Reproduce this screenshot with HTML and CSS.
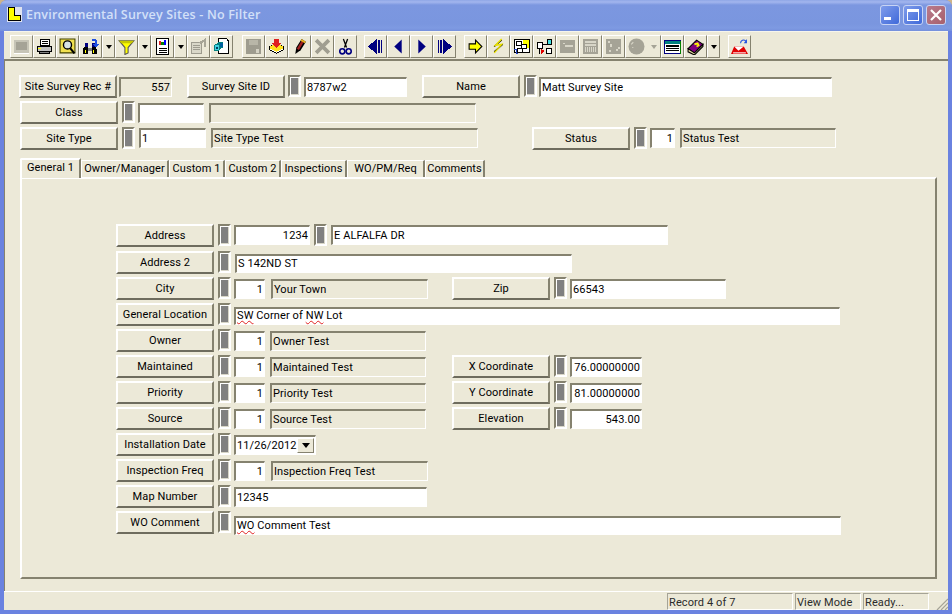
FILE: index.html
```html
<!DOCTYPE html>
<html lang="en">
<head>
<meta charset="utf-8">
<title>Environmental Survey Sites - No Filter</title>
<link rel="stylesheet" href="styles.css">
</head>
<body>
<div class="window">
  <header class="titlebar">
    <svg class="app-icon" viewBox="0 0 16 16" shape-rendering="crispEdges"><rect width="16" height="16" fill="#dfe3ef"/><path d="M1 0h7v9h7v6H1z" fill="#000"/><path d="M2 1h5v9h7v4H2z" fill="#ffff00"/></svg>
    <span class="title">Environmental Survey Sites - No Filter</span>
    <div class="caption-btns">
      <span class="cap cap-min"><i class="min-glyph"></i></span>
      <span class="cap cap-max"><i class="max-glyph"></i></span>
      <span class="cap cap-close"><svg viewBox="0 0 12 12" width="12" height="12"><path d="M1 1l10 10M11 1L1 11" stroke="#fff" stroke-width="2.2"/></svg></span>
    </div>
  </header>

  <nav class="toolbar">
    <div class="tb-group">
      <span class="tb"><svg viewBox="0 0 16 16" shape-rendering="crispEdges"><rect x="1" y="2" width="14" height="12" fill="#c6c4b6"/><rect x="3" y="4" width="10" height="7" fill="#a5a396"/><path d="M1 14h14v1H1z" fill="#fff"/></svg></span>
      <span class="tb"><svg viewBox="0 0 16 16" shape-rendering="crispEdges"><path d="M4 1h9v6H4z" fill="#fff" stroke="#000"/><path d="M6 3h5M6 5h5" stroke="#000"/><path d="M1 8h14v5H1z" fill="#c0c0c0" stroke="#000"/><path d="M3 13h10v2H3z" fill="#808080" stroke="#000"/><path d="M2 10h3" stroke="#ff0"/></svg></span>
      <span class="tb"><svg viewBox="0 0 16 16"><path d="M1 1h14v13H1z" fill="#f0e050" stroke="#404000"/><circle cx="8" cy="6.5" r="3.8" fill="#d8e4e4" stroke="#000" stroke-width="1.3"/><path d="M10.5 9.5l4 5" stroke="#000" stroke-width="2"/></svg></span>
      <span class="tb"><svg viewBox="0 0 16 16" shape-rendering="crispEdges"><path d="M2 8h4v7H1v-4zM9 8h4l1 3v4H9z" fill="#000"/><path d="M3 5h3v3H3zM9 5h3v3H9z" fill="#000080"/><path d="M6 9h3v3H6z" fill="#808080"/><path d="M3 11h1v3H3zM10 11h1v3h-1z" fill="#ffff00"/><path d="M8 3h1V1h4v1h1v4h2l-3 3-3-3h2V3H9z" fill="#1f50e0"/></svg></span>
      <span class="tb-arrow"><i class="tri"></i></span>
      <span class="tb"><svg viewBox="0 0 16 16"><path d="M1 2.5h14L9.5 9v5l-3 1.5V9z" fill="#ffff00" stroke="#555" stroke-width="1"/><path d="M1 2.5h14L13 5H3z" fill="#c8c800"/></svg></span>
      <span class="tb-arrow"><i class="tri"></i></span>
      <span class="tb"><svg viewBox="0 0 16 16" shape-rendering="crispEdges"><path d="M2 0h12v16H2z" fill="#000"/><path d="M3 1h10v14H3z" fill="#fff"/><path d="M5 3h2v4H5z" fill="#e02020"/><path d="M7 4h2v3H7z" fill="#008000"/><path d="M9 2h2v5H9z" fill="#0000ff"/><path d="M5 9h7v1H5zM5 11h7v1H5zM5 13h7v1H5z" fill="#000"/></svg></span>
      <span class="tb-arrow"><i class="tri"></i></span>
      <span class="tb"><svg viewBox="0 0 16 16" shape-rendering="crispEdges"><path d="M1 4h10v11H1z" fill="#d9d7c8" stroke="#9e9c8f"/><path d="M3 7h6M3 9h6M3 11h6" stroke="#9e9c8f"/><path d="M9 5l5-3v6" fill="none" stroke="#a8a698" stroke-width="2"/></svg></span>
      <span class="tb"><svg viewBox="0 0 16 16" shape-rendering="crispEdges"><path d="M5 0h8l2 2v13H5z" fill="#000"/><path d="M6 1h7v2h1v11H6z" fill="#fff"/><path d="M1 7l4-3h4v5l-4 3H1z" fill="#008080"/><path d="M2 7h4v4H2z" fill="#40d0e0"/><path d="M3 8h2v2H3z" fill="#004060"/><path d="M7 5h2v3H7z" fill="#0060a0"/></svg></span>
    </div>
    <div class="tb-group gap9">
      <span class="tb"><svg viewBox="0 0 16 16" shape-rendering="crispEdges"><path d="M1 1h14v14H1z" fill="#9e9c8f"/><path d="M4 2h8v5H4z" fill="#b8b6a8"/><path d="M10 10h3v4h-3z" fill="#d4d2c4"/></svg></span>
      <span class="tb"><svg viewBox="0 0 16 16" shape-rendering="crispEdges"><path d="M1 8l7-4 7 4v3l-7 4-7-4z" fill="#000"/><path d="M2 8l6-3 6 3v2l-6 3-6-3z" fill="#ffe020"/><path d="M2 10l6 3 6-3v1l-6 3-6-3z" fill="#fff"/><path d="M6 1h4v4h2l-4 4-4-4h2z" fill="#e02020"/></svg></span>
      <span class="tb"><svg viewBox="0 0 16 16"><path d="M4 15l1-6 5-8 4 2.500-5 8z" fill="#000"/><path d="M5.500 10l4.500-7.500 2 1.200-4.500 7.500z" fill="#a02020"/><path d="M10 1l4 2.500-1 1.500-4-2.500z" fill="#e8b020"/></svg></span>
      <span class="tb"><svg viewBox="0 0 16 16"><path d="M2 2l12 12M14 2L2 14" stroke="#a09e91" stroke-width="3.500"/></svg></span>
      <span class="tb"><svg viewBox="0 0 16 16"><path d="M6 1l3 8M10 1L7 9" stroke="#000" stroke-width="1.200" fill="none"/><circle cx="5" cy="12.500" r="2.400" fill="none" stroke="#000080" stroke-width="1.500"/><circle cx="11" cy="12.500" r="2.400" fill="none" stroke="#000080" stroke-width="1.500"/><path d="M7 10.500L6 11M9 10.500l1 .5" stroke="#000080"/></svg></span>
    </div>
    <div class="tb-group gap7">
      <span class="tb"><svg viewBox="0 0 16 16" shape-rendering="crispEdges"><path d="M10 2h2v12h-2zM13 2h1v12h-1z" fill="#000080"/><path d="M9 1v14L1 8z" fill="#000080"/></svg></span>
      <span class="tb"><svg viewBox="0 0 16 16"><path d="M11 1.500v13L4 8z" fill="#000080"/></svg></span>
      <span class="tb"><svg viewBox="0 0 16 16"><path d="M5 1.500v13L12 8z" fill="#000080"/></svg></span>
      <span class="tb"><svg viewBox="0 0 16 16" shape-rendering="crispEdges"><path d="M2 2h1v12H2zM4 2h2v12H4z" fill="#000080"/><path d="M7 1v14l8-7z" fill="#000080"/></svg></span>
    </div>
    <div class="tb-group gap8">
      <span class="tb"><svg viewBox="0 0 16 16"><path d="M2 5.500h6V2l6 6-6 6v-3.500H2z" fill="#ffff00" stroke="#000"/></svg></span>
      <span class="tb"><svg viewBox="0 0 16 16"><path d="M11 2L4 8M12 6l-8 7" stroke="#000" stroke-width="1.200"/><path d="M11 1L5 7l6-1-7 8" fill="none" stroke="#e8e000" stroke-width="1.400"/></svg></span>
      <span class="tb"><svg viewBox="0 0 16 16" shape-rendering="crispEdges"><path d="M1 1h15v13H1z" fill="#000"/><path d="M2 2h13v11H2z" fill="#fff"/><path d="M9 2h6v7H9z" fill="#ffff00"/><path d="M3 3h5v4H3zM8 6h5v4H8zM4 10h5v4H4z" fill="#fff" stroke="#000"/><path d="M1 11h2v4h2" fill="none" stroke="#2040c0"/></svg></span>
      <span class="tb"><svg viewBox="0 0 16 16" shape-rendering="crispEdges"><path d="M1 4h6v6H1zM10 1h5v6h-5zM9 9h6v6H9z" fill="#000"/><path d="M2 5h4v4H2z" fill="#fff"/><path d="M11 2h3v4h-3z" fill="#40e0e0"/><path d="M10 10h4v4h-4z" fill="#fff"/><path d="M7 6h3v1H7z" fill="#000"/><path d="M3 10h1v5H3z" fill="#000"/><path d="M5 10v5l3-2.500z" fill="#e00000"/></svg></span>
      <span class="tb"><svg viewBox="0 0 16 16" shape-rendering="crispEdges"><rect x="1" y="2" width="14" height="12" fill="#a5a396"/><path d="M4 5h2v1H4zM6 7h7v1H6z" fill="#d8d6c8"/></svg></span>
      <span class="tb"><svg viewBox="0 0 16 16" shape-rendering="crispEdges"><rect x="1" y="1" width="14" height="14" fill="#a5a396"/><path d="M3 3h10v1H3zM3 6h10v1H3zM3 8v5M5 8v5M7 8v5M9 8v5M11 8v5M13 8v5" fill="none" stroke="#d8d6c8"/></svg></span>
      <span class="tb"><svg viewBox="0 0 16 16" shape-rendering="crispEdges"><rect x="1" y="1" width="14" height="14" fill="#a5a396"/><path d="M3 3h2v2H3zM5 6h2v2H5zM10 10h2v2h-2zM4 11h2v2H4zM12 8h2v2h-2z" fill="#d8d6c8"/></svg></span>
      <span class="tb tb-wide"><svg viewBox="0 0 16 16"><circle cx="8" cy="8" r="7.500" fill="#a5a396"/><path d="M3 6l2-2M4 9h1" stroke="#d8d6c8"/></svg><i class="tri tri-off"></i></span>
      <span class="tb"><svg viewBox="0 0 16 16" shape-rendering="crispEdges"><path d="M0 2h16v13H0z" fill="#000080"/><path d="M1 3h14v3H1z" fill="#008080"/><path d="M1 6h14v8H1z" fill="#fff"/><path d="M2 7h12v1H2zM2 9h12v1H2zM2 11h12v1H2z" fill="#000"/><path d="M15 3h1v12h-1z" fill="#008000"/></svg></span>
      <span class="tb"><svg viewBox="0 0 16 16"><path d="M1 10l8-8 6 4-8 8z" fill="#800080" stroke="#000"/><path d="M1 10v3l6 3 8-8V6l-8 8z" fill="#e8d8a0" stroke="#000"/><path d="M7 6l3-1 1 2-2 1" fill="none" stroke="#ffff00" stroke-width="1.500"/></svg></span>
      <span class="tb-arrow"><i class="tri"></i></span>
    </div>
    <div class="tb-group gap8">
      <span class="tb"><svg viewBox="0 0 16 16"><path d="M0 15l3-7h9l4 7z" fill="#e00000"/><path d="M3 8l4 4 5-4" fill="#fff"/><path d="M2 14h12" stroke="#fff"/><path d="M9 5c0-3 3-4 5-2" fill="none" stroke="#1f50e0"/><path d="M15 1v4h-3z" fill="#1f50e0"/></svg></span>
    </div>
  </nav>

  <main class="form">
    <div class="row">
      <span class="btn">Site Survey Rec #</span>
      <span class="box ro num ml2 w53">557</span>
      <span class="btn ml15">Survey Site ID</span>
      <i class="lock ml3"></i>
      <span class="box ml3 w103">8787w2</span>
      <span class="btn ml15">Name</span>
      <i class="lock ml4"></i>
      <span class="box ml2 w293">Matt Survey Site</span>
    </div>
    <div class="row">
      <span class="btn ml1">Class</span>
      <i class="lock ml4"></i>
      <span class="box ml3 w66"></span>
      <span class="box ro ml5 w267"></span>
    </div>
    <div class="row">
      <span class="btn ml1">Site Type</span>
      <i class="lock ml4"></i>
      <span class="box box-up ml4 w67">1</span>
      <span class="box box-up ro ml5 w267">Site Type Test</span>
      <span class="btn ml54">Status</span>
      <i class="lock ml4"></i>
      <span class="box box-up num ml3 w25">1</span>
      <span class="box box-up ro ml5 w156">Status Test</span>
    </div>

    <div class="tabs">
      <span class="tab tab-on w60">General 1</span>
      <span class="tab w87">Owner/Manager</span>
      <span class="tab w55">Custom 1</span>
      <span class="tab w55">Custom 2</span>
      <span class="tab w65">Inspections</span>
      <span class="tab w77">WO/PM/Req</span>
      <span class="tab w59">Comments</span>
    </div>

    <section class="panel">
      <div class="row row-tall">
        <span class="btn">Address</span>
        <i class="lock ml4"></i>
        <span class="box box-up num ml3 w76">1234</span>
        <i class="lock ml4"></i>
        <span class="box box-up ml4 w337">E ALFALFA DR</span>
      </div>
      <div class="row">
        <span class="btn">Address 2</span>
        <i class="lock ml4"></i>
        <span class="box box-low ml4 w337">S 142ND ST</span>
      </div>
      <div class="row">
        <span class="btn">City</span>
        <i class="lock ml4"></i>
        <span class="box num ml3 w31">1</span>
        <span class="box ro ml6 w157">Your Town</span>
        <span class="btn ml24">Zip</span>
        <i class="lock ml4"></i>
        <span class="box ml3 w156">66543</span>
      </div>
      <div class="row">
        <span class="btn">General Location</span>
        <i class="lock ml4"></i>
        <span class="box box-short ml3 w606"><u class="spell">SW</u> Corner of <u class="spell">NW</u> Lot</span>
      </div>
      <div class="row">
        <span class="btn">Owner</span>
        <i class="lock ml4"></i>
        <span class="box num ml3 w31">1</span>
        <span class="box ro ml5 w156">Owner Test</span>
      </div>
      <div class="row">
        <span class="btn">Maintained</span>
        <i class="lock ml4"></i>
        <span class="box num ml3 w31">1</span>
        <span class="box ro ml5 w156">Maintained Test</span>
        <span class="btn ml26">X Coordinate</span>
        <i class="lock ml4"></i>
        <span class="box num ml3 w72">76.00000000</span>
      </div>
      <div class="row">
        <span class="btn">Priority</span>
        <i class="lock ml4"></i>
        <span class="box num ml3 w31">1</span>
        <span class="box ro ml5 w156">Priority Test</span>
        <span class="btn ml26">Y Coordinate</span>
        <i class="lock ml4"></i>
        <span class="box num ml3 w72">81.00000000</span>
      </div>
      <div class="row">
        <span class="btn">Source</span>
        <i class="lock ml4"></i>
        <span class="box num ml3 w31">1</span>
        <span class="box ro ml5 w156">Source Test</span>
        <span class="btn ml26">Elevation</span>
        <i class="lock ml4"></i>
        <span class="box num ml3 w72">543.00</span>
      </div>
      <div class="row">
        <span class="btn">Installation Date</span>
        <i class="lock ml4"></i>
        <span class="box date ml3 w82">11/26/2012<b class="date-btn"><i class="tri"></i></b></span>
      </div>
      <div class="row">
        <span class="btn">Inspection Freq</span>
        <i class="lock ml4"></i>
        <span class="box num ml3 w31">1</span>
        <span class="box ro ml6 w157">Inspection Freq Test</span>
      </div>
      <div class="row">
        <span class="btn">Map Number</span>
        <i class="lock ml4"></i>
        <span class="box ml3 w193">12345</span>
      </div>
      <div class="row">
        <span class="btn">WO Comment</span>
        <i class="lock ml4"></i>
        <span class="box box-last ml3 w607"><u class="spell">WO</u> Comment Test</span>
      </div>
    </section>
  </main>

  <footer class="statusbar">
    <span class="cell w126">Record 4 of 7</span>
    <span class="cell w66">View Mode</span>
    <span class="cell w66">Ready...</span>
    <svg class="grip" viewBox="0 0 12 12" width="12" height="12"><path d="M12 1L1 12M12 5l-7 7M12 9l-3 3" stroke="#a5a396" stroke-width="1.200"/></svg>
  </footer>
</div>
</body>
</html>
```

FILE: styles.css
```css
* { box-sizing: border-box; }
html, body { margin: 0; padding: 0; }
body {
  width: 952px;
  height: 614px;
  overflow: hidden;
  background: #cdb48a;
  font-family: Roboto, "Liberation Sans", sans-serif;
  font-size: 11px;
  letter-spacing: 0.1px;
  color: #000;
}
i, u, b { font-style: normal; font-weight: normal; }

.window {
  width: 952px;
  height: 614px;
  display: flex;
  flex-direction: column;
  background: #6a82e0;
  border-radius: 7px 7px 0 0;
  overflow: hidden;
  padding: 0 4px 4px;
}

/* title bar */
.titlebar {
  height: 31px;
  flex: none;
  margin: 0 -4px;
  padding: 0 6px 2px 7px;
  display: flex;
  align-items: center;
  background: linear-gradient(180deg, #8fa7e6 0, #a3b6ee 2px, #7c97e0 5px, #7a96df 24px, #7e9ae2 28px, #7590dc 31px);
}
.app-icon { width: 15px; height: 15px; flex: none; }
.title {
  margin-left: 4px;
  font-family: "Open Sans", sans-serif;
  font-size: 12.5px;
  font-weight: 600;
  color: #d3e0f8;
  letter-spacing: 0.2px;
}
.caption-btns { margin-left: auto; display: flex; gap: 3px; }
.cap {
  width: 20px;
  height: 20px;
  border: 1px solid #c8d4f4;
  border-radius: 3px;
  display: flex;
  align-items: center;
  justify-content: center;
  background: linear-gradient(135deg, #7f9ceb, #3f69d9);
}
.cap-close { background: linear-gradient(135deg, #b87a8c, #a8606c); }
.min-glyph { width: 7px; height: 3px; background: #fff; margin: 8px 5px 0 0; }
.max-glyph { width: 12px; height: 12px; border: 1px solid #fff; border-top-width: 3px; }

/* toolbar */
.toolbar {
  height: 30px;
  flex: none;
  background: #ece9d8;
  border-top: 1px solid #f6f5ec;
  border-bottom: 2px solid #85826f;
  padding: 3px 0 0 6px;
  display: flex;
  align-items: flex-start;
}
.tb-group { display: flex; }
.gap7 { margin-left: 7px; }
.gap8 { margin-left: 8px; }
.gap9 { margin-left: 9px; }
.tb, .tb-arrow {
  height: 23px;
  width: 23px;
  flex: none;
  background: #ece9d8;
  border: 1px solid;
  border-color: #fff #85826f #85826f #fff;
  display: flex;
  align-items: center;
  justify-content: center;
}
.tb svg { width: 17px; height: 17px; flex: none; }
.tb-arrow { width: 13px; }
.tb-wide { width: 36px; justify-content: flex-start; padding-left: 2px; }
.tb-wide .tri { margin-left: 6px; }
.tri {
  display: block;
  width: 0;
  height: 0;
  border-left: 3.5px solid transparent;
  border-right: 3.5px solid transparent;
  border-top: 4px solid #000;
}
.tri-off { border-top-color: #a5a396; }

/* form */
.form {
  flex: 1;
  min-height: 0;
  background: #ece9d8;
  border-left: 1px solid #85826f;
  padding: 14px 0 0 14px;
}
.row {
  display: flex;
  align-items: flex-start;
  height: 22px;
  margin-bottom: 4px;
}
.btn {
  width: 98px;
  height: 23px;
  flex: none;
  background: #ece9d8;
  border: 2px solid;
  border-color: #fff #85826f #6e6c5e #fff;
  display: flex;
  align-items: center;
  justify-content: center;
  white-space: nowrap;
}
.lock {
  width: 13px;
  height: 22px;
  flex: none;
  background: #808080;
  border: 2px solid;
  border-color: #85826f #fff #fff #85826f;
  box-shadow: inset 1px 1px 0 #fff, inset -1px -1px 0 #d8d6c8;
}
.box {
  height: 20px;
  flex: none;
  margin-top: 2px;
  background: #fff;
  border: 1px solid;
  border-width: 2px 1px 1px 2px;
  border-color: #85826f #fff #fff #85826f;
  line-height: 18px;
  padding: 0 1px;
  white-space: nowrap;
}
.ro { background: #ece9d8; }
.num { text-align: right; }
.box-up { margin-top: 1px; }
.box-low { margin-top: 3px; height: 19px; line-height: 16px; }
.box-short { margin-top: 4px; height: 18px; line-height: 13px; }
.box-last { margin-top: 5px; height: 19px; line-height: 16px; }
.spell { text-decoration: underline wavy #e02020 1px; text-underline-offset: 1px; }

.date { display: flex; align-items: center; justify-content: space-between; padding-right: 1px; padding-top: 1px; }
.date-btn {
  width: 17px;
  height: 15px;
  background: #ece9d8;
  border: 1px solid;
  border-color: #fff #85826f #85826f #fff;
  display: flex;
  align-items: center;
  justify-content: center;
  margin-top: -2px;
}
.date-btn .tri {
  border-left-width: 4.5px;
  border-right-width: 4.5px;
  border-top-width: 5px;
}

/* tabs */
.tabs {
  display: flex;
  align-items: flex-end;
  height: 20px;
  margin: 8px 0 0 1px;
}
.tab {
  height: 17px;
  border-top: 1px solid #fff;
  border-left: 1px solid #fff;
  border-right: 2px solid #85826f;
  display: flex;
  align-items: center;
  justify-content: center;
  white-space: nowrap;
  padding-bottom: 1px;
}
.tab-on {
  height: 20px;
  border-left: 2px solid #fff;
  border-top: 2px solid #fff;
  border-radius: 2px 0 0 0;
  padding-bottom: 4px;
  position: relative;
  margin-bottom: -1px;
  background: #ece9d8;
}
.panel {
  width: 917px;
  height: 402px;
  margin-left: 1px;
  border: 2px solid;
  border-color: #fff #85826f #85826f #fff;
  padding: 45px 0 0 94px;
}
.row-tall { margin-bottom: 5px; }

/* status */
.statusbar {
  height: 19px;
  flex: none;
  background: #ece9d8;
  border-top: 1px solid #fff;
  display: flex;
  align-items: flex-start;
  padding: 1px 0 0 663px;
  position: relative;
}
.cell {
  height: 17px;
  margin-right: 2px;
  border: 1px solid;
  border-color: #a5a396 #fff #fff #a5a396;
  padding-left: 1px;
  line-height: 17px;
  color: #2b2b2b;
  white-space: nowrap;
}
.grip { position: absolute; right: 0; bottom: 0; }

/* sizing helpers */
.ml1 { margin-left: 1px; }
.ml2 { margin-left: 2px; }
.ml3 { margin-left: 3px; }
.ml4 { margin-left: 4px; }
.ml5 { margin-left: 5px; }
.ml6 { margin-left: 6px; }
.ml15 { margin-left: 15px; }
.ml24 { margin-left: 24px; }
.ml26 { margin-left: 26px; }
.ml54 { margin-left: 54px; }
.w25 { width: 25px; }
.w31 { width: 31px; }
.w53 { width: 53px; }
.w55 { width: 56px; }
.w59 { width: 60px; }
.w60 { width: 61px; }
.w65 { width: 66px; }
.w66 { width: 66px; }
.w67 { width: 67px; }
.w72 { width: 72px; }
.w76 { width: 76px; }
.w77 { width: 78px; }
.w82 { width: 82px; }
.w87 { width: 88px; }
.w103 { width: 103px; }
.w126 { width: 126px; }
.w156 { width: 156px; }
.w157 { width: 157px; }
.w193 { width: 193px; }
.w267 { width: 267px; }
.w293 { width: 293px; }
.w337 { width: 337px; }
.w606 { width: 606px; }
.w607 { width: 607px; }
```
